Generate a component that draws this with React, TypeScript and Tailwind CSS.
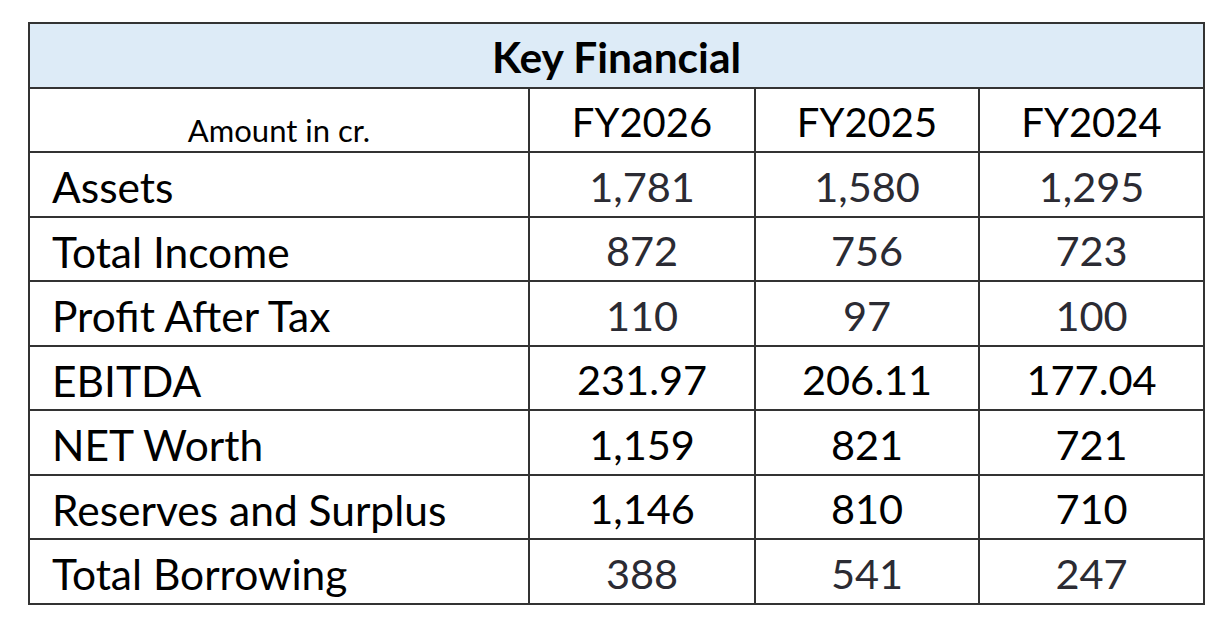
const years = ['FY2026', 'FY2025', 'FY2024'];

const rows: { label: string; values: string[]; dark?: boolean }[] = [
  { label: 'Assets', values: ['1,781', '1,580', '1,295'] },
  { label: 'Total Income', values: ['872', '756', '723'] },
  { label: 'Profit After Tax', values: ['110', '97', '100'] },
  { label: 'EBITDA', values: ['231.97', '206.11', '177.04'], dark: true },
  { label: 'NET Worth', values: ['1,159', '821', '721'], dark: true },
  { label: 'Reserves and Surplus', values: ['1,146', '810', '710'], dark: true },
  { label: 'Total Borrowing', values: ['388', '541', '247'] },
];

export default function App() {
  return (
    <div className="w-[1230px] h-[617px] bg-white pt-[22px] pl-[28px] font-['Lato',sans-serif] text-black">
      <table className="w-[1175px] border-collapse border-2 border-[#333] table-fixed">
        <colgroup>
          <col className="w-[500px]" />
          <col className="w-[226px]" />
          <col className="w-[224px]" />
          <col className="w-[225px]" />
        </colgroup>
        <thead>
          <tr className="h-[65px] bg-[#ddebf7]">
            <th colSpan={4} className="border-2 border-[#333] text-[42.5px] font-bold leading-none pt-[4px]">
              Key Financial
            </th>
          </tr>
          <tr className="h-[64px]">
            <th className="border-2 border-[#333] text-[31px] font-normal align-bottom pb-[5px] leading-none">
              Amount in cr.
            </th>
            {years.map((y) => (
              <th key={y} className="border-2 border-[#333] text-[40px] font-normal leading-none pt-[4px]">
                {y}
              </th>
            ))}
          </tr>
        </thead>
        <tbody>
          {rows.map((r) => (
            <tr key={r.label} className="h-[64.5px]">
              <td className="border-2 border-[#333] text-[42.5px] leading-none pl-[22px] pt-[6px]">{r.label}</td>
              {r.values.map((v, i) => (
                <td
                  key={i}
                  className={`border-2 border-[#333] text-[41.5px] leading-none text-center pt-[4px] ${
                    r.dark ? 'text-black' : 'text-[#2b2b33]'
                  }`}
                >
                  {v}
                </td>
              ))}
            </tr>
          ))}
        </tbody>
      </table>
    </div>
  );
}
